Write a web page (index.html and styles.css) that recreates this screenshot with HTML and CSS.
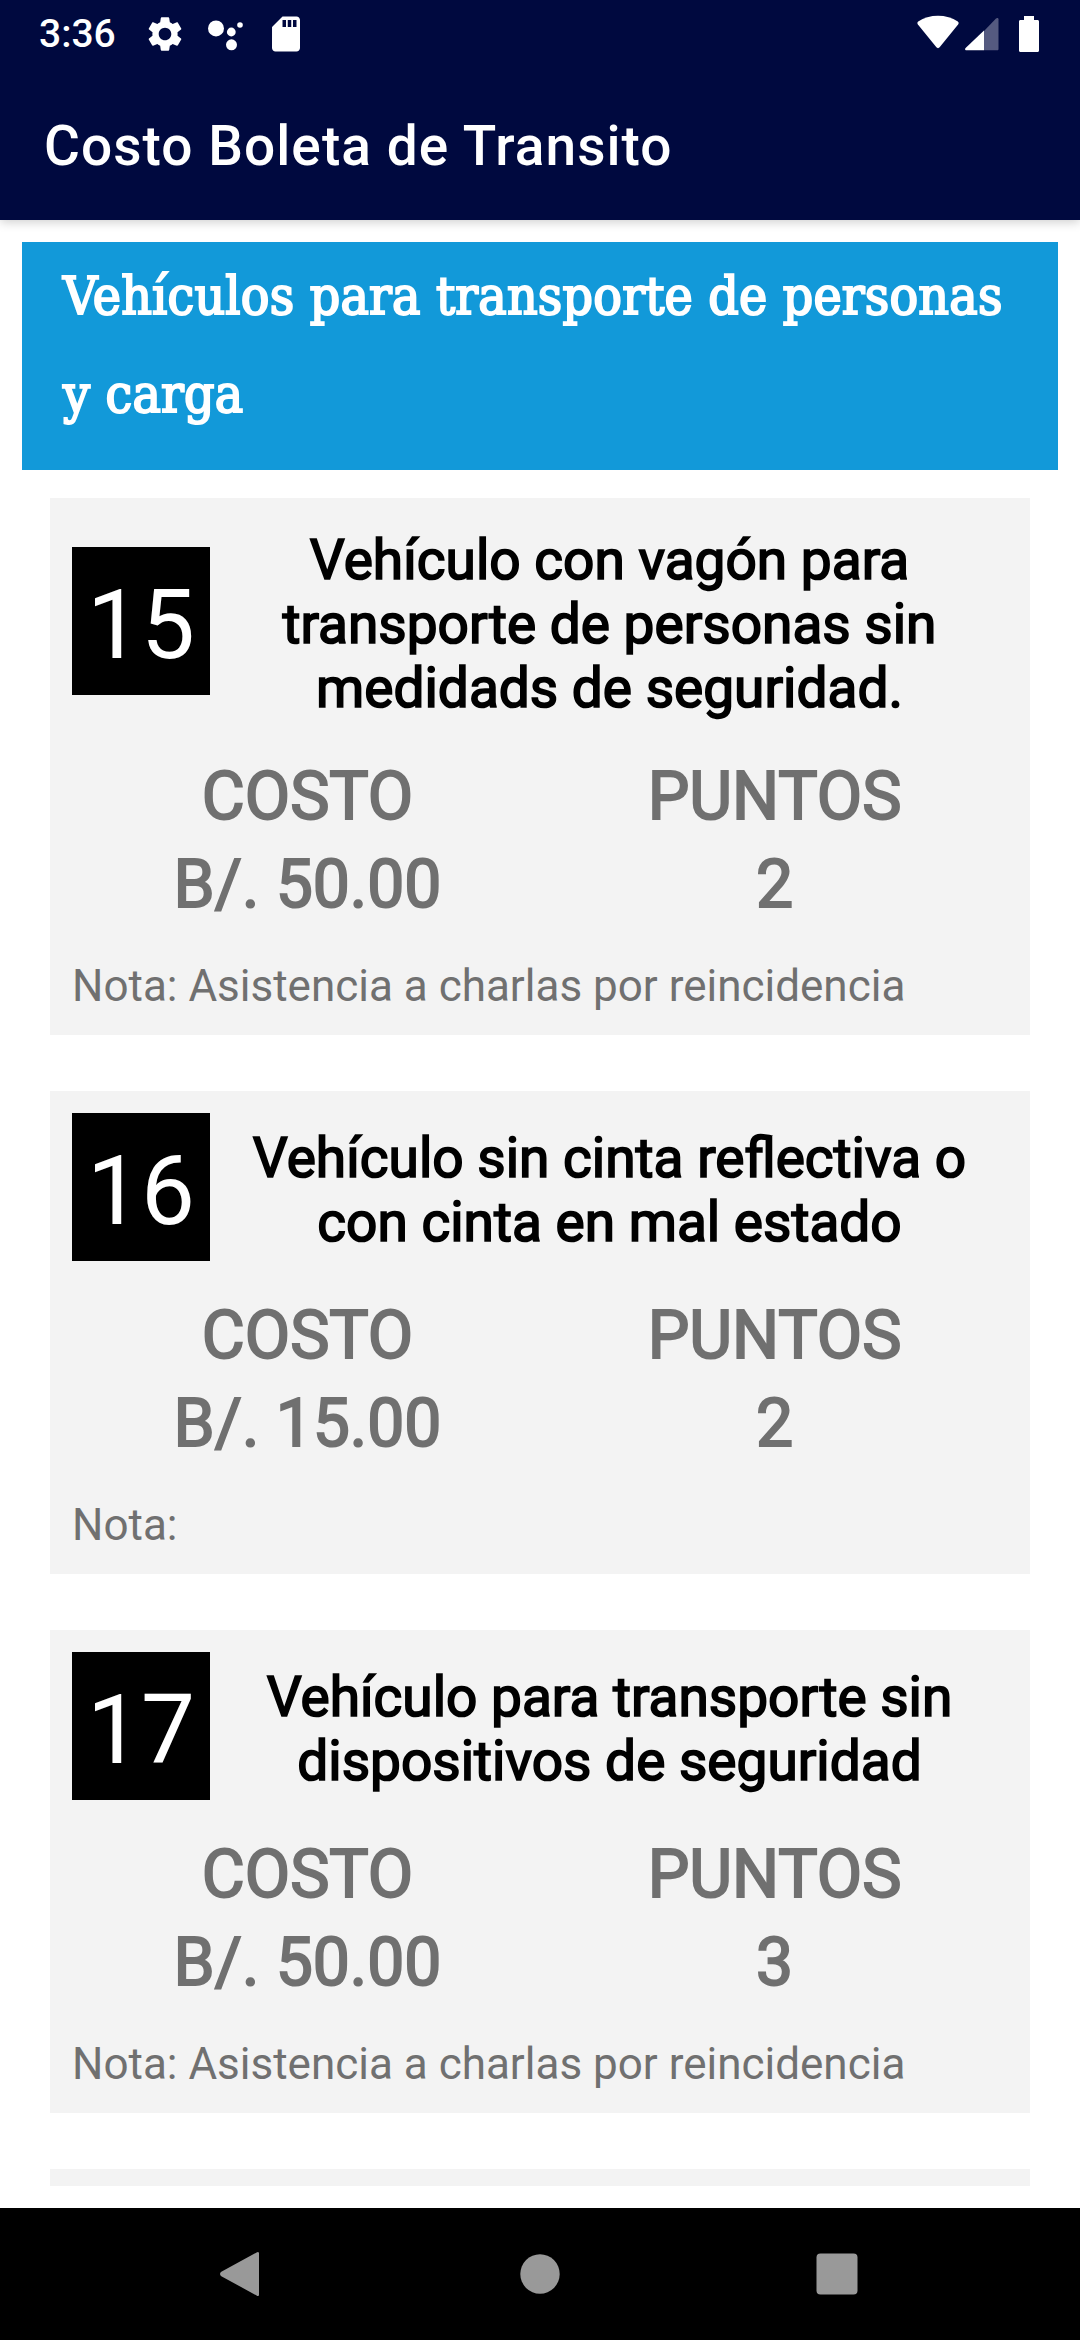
FILE: index.html
```html
<!DOCTYPE html>
<html lang="es">
<head>
  <meta charset="UTF-8">
  <title>Costo Boleta de Transito</title>
  <meta name="viewport" content="width=device-width, initial-scale=1.0">
  <link rel="stylesheet" href="styles.css">
</head>
<body>

  <header class="top">
    <div class="status">
      <span class="clock">3:36</span>
      <svg class="gear" width="42" height="42" viewBox="0 0 24 24"><path d="M19.14 12.94c.04-.3.06-.61.06-.94 0-.32-.02-.64-.07-.94l2.03-1.58c.18-.14.23-.41.12-.61l-1.92-3.32c-.12-.22-.37-.29-.59-.22l-2.39.96c-.5-.38-1.03-.7-1.62-.94l-.36-2.54c-.04-.24-.24-.41-.48-.41h-3.84c-.24 0-.43.17-.47.41l-.36 2.54c-.59.24-1.13.57-1.62.94l-2.39-.96c-.22-.08-.47 0-.59.22L2.74 8.87c-.12.21-.08.47.12.61l2.03 1.58c-.05.3-.09.63-.09.94s.02.64.07.94l-2.03 1.58c-.18.14-.23.41-.12.61l1.92 3.32c.12.22.37.29.59.22l2.39-.96c.5.38 1.03.7 1.62.94l.36 2.54c.05.24.24.41.48.41h3.84c.24 0 .44-.17.47-.41l.36-2.54c.59-.24 1.13-.56 1.62-.94l2.39.96c.22.08.47 0 .59-.22l1.92-3.32c.12-.22.07-.47-.12-.61l-2.01-1.58zM12 15.6c-1.98 0-3.6-1.62-3.6-3.6s1.62-3.6 3.6-3.6 3.6 1.62 3.6 3.6-1.62 3.6-3.6 3.6z"/></svg>
      <svg class="dots" width="42" height="42" viewBox="0 0 42 42"><circle cx="12" cy="15.4" r="8"/><circle cx="27.3" cy="19" r="4.4"/><circle cx="27.5" cy="31.8" r="5.5"/><circle cx="36" cy="12" r="2.8"/></svg>
      <svg class="sd" width="42" height="42" viewBox="0 0 24 24"><path d="M18 2h-8L4.02 8 4 20c0 1.1.9 2 2 2h12c1.1 0 2-.9 2-2V4c0-1.1-.9-2-2-2zm-6 6h-2V4h2v4zm3 0h-2V4h2v4zm3 0h-2V4h2v4z"/></svg>
      <svg class="wifi" width="42" height="34" viewBox="0 0 42 34"><path d="M1.2 6.5C12-1.3 30-1.3 40.8 6.5c1 .8 1.1 1.9.3 2.9L22.6 32.3c-.9 1.1-2.3 1.1-3.2 0L.9 9.4C.1 8.4.2 7.3 1.2 6.5z"/></svg>
      <svg class="signal" width="34" height="34" viewBox="0 0 34 34"><path class="dim" d="M19 14 31 1.5c1-1 2.5-.8 2.5.8V32c0 .8-.5 1.3-1.3 1.3H19z"/><path d="M19 13.5v19.8H1.5c-1.5 0-1.8-1.3-.9-2.3z"/></svg>
      <svg class="battery" width="20" height="36" viewBox="0 0 20 36"><path d="M5 0h10v4h3.5c.9 0 1.5.6 1.5 1.5v29c0 .9-.6 1.5-1.5 1.5h-17C.6 36 0 35.4 0 34.5v-29C0 4.6.6 4 1.5 4H5z"/></svg>
    </div>
    <h1>Costo Boleta de Transito</h1>
  </header>

  <main>
    <h2>Vehículos para transporte de personas<br>y carga</h2>

    <div class="list">
      <div class="card">
        <div class="head tall">
          <span class="num">15</span>
          <h3>Vehículo con vagón para<br>transporte de personas sin<br>medidads de seguridad.</h3>
        </div>
        <div class="data">
          <div>COSTO<br>B/. 50.00</div>
          <div>PUNTOS<br>2</div>
        </div>
        <p class="nota">Nota: Asistencia a charlas por reincidencia</p>
      </div>

      <div class="card">
        <div class="head">
          <span class="num">16</span>
          <h3>Vehículo sin cinta reflectiva o<br>con cinta en mal estado</h3>
        </div>
        <div class="data">
          <div>COSTO<br>B/. 15.00</div>
          <div>PUNTOS<br>2</div>
        </div>
        <p class="nota">Nota:</p>
      </div>

      <div class="card">
        <div class="head">
          <span class="num">17</span>
          <h3>Vehículo para transporte sin<br>dispositivos de seguridad</h3>
        </div>
        <div class="data">
          <div>COSTO<br>B/. 50.00</div>
          <div>PUNTOS<br>3</div>
        </div>
        <p class="nota">Nota: Asistencia a charlas por reincidencia</p>
      </div>

      <!-- next card, cut by the list edge -->
      <div class="card"></div>
    </div>
  </main>

  <nav>
    <svg width="48" height="48" viewBox="3 0 48 48"><path d="M43 3.5v41c0 1.6-1.2 2-2.4 1L5.3 26.2c-1.7-1.2-1.7-3.2 0-4.4L40.6 2.5c1.2-1 2.4-.6 2.4 1z"/></svg>
    <svg width="48" height="48" viewBox="0 0 48 48"><circle cx="24" cy="24" r="19.7"/></svg>
    <svg width="48" height="48" viewBox="0 0 48 48"><rect x="3.5" y="3.5" width="41" height="41" rx="4"/></svg>
  </nav>

</body>
</html>
```
FILE: styles.css
```css
* { box-sizing: border-box; }
body {
  margin: 0;
  height: 2340px;
  display: flex;
  flex-direction: column;
  overflow: hidden;
  background: #fff;
  font-family: Roboto, sans-serif;
}
h1, h2, h3, p { margin: 0; font-weight: 400; white-space: nowrap; }

.top {
  height: 220px;
  background: #00093f;
  color: #fff;
  box-shadow: 0 2px 10px rgba(0,0,0,.2);
}
.status { display: flex; align-items: center; height: 67px; padding: 0 41px 0 39px; }
.status svg { fill: #fff; }
.status .dim { fill: #555a80; }
.clock { width: 105px; font-size: 39px; font-weight: 500; }
.dots { margin-left: 18px; }
.sd { margin-left: 19px; }
.wifi { margin-left: auto; margin-bottom: 3px; }
.signal { margin-left: 6px; }
.battery { margin-left: 20px; }
.top h1 {
  padding-left: 44px;
  font-size: 55px;
  font-weight: 500;
  line-height: 64px;
  margin-top: 47px;
  letter-spacing: 1.05px;
}

main { flex: 1; min-height: 0; padding: 22px 22px; display: flex; flex-direction: column; }
h2 {
  height: 228px;
  padding: 5px 41px;
  background: #1299d9;
  color: #fff;
  font-family: "DejaVu Serif Condensed", "DejaVu Serif", serif;
  font-stretch: condensed;
  font-size: 53px;
  line-height: 98px;
  letter-spacing: .2px;
  -webkit-text-stroke: 2px #fff;
}

.list { flex: 1; min-height: 0; overflow: hidden; padding: 28px 28px 0; }
.card { height: 483px; margin-bottom: 56px; padding: 22px; background: #f3f3f3; }
.card:first-child { height: 537px; }
.head { display: flex; align-items: center; height: 148px; }
.tall { height: 202px; }
.num {
  width: 138px;
  height: 148px;
  background: #000;
  color: #fff;
  font-size: 96px;
  line-height: 156px;
  text-align: center;
}
h3 {
  flex: 1;
  padding: 5px 0 0 1px;
  font-size: 55px;
  line-height: 64px;
  text-align: center;
  -webkit-text-stroke: 1.7px #000;
}
.data {
  display: grid;
  grid-template-columns: 1fr 1fr;
  margin-top: 31px;
  padding-left: 2px;
  font-size: 66px;
  line-height: 88px;
  text-align: center;
  color: #707070;
  -webkit-text-stroke: 2px #707070;
}
.nota { margin-top: 28px; font-size: 44px; line-height: 58px; color: #707070; }

nav {
  height: 132px;
  display: flex;
  justify-content: center;
  align-items: center;
  gap: 249px;
  background: #000;
}
nav svg { fill: #999; overflow: visible; }
```
